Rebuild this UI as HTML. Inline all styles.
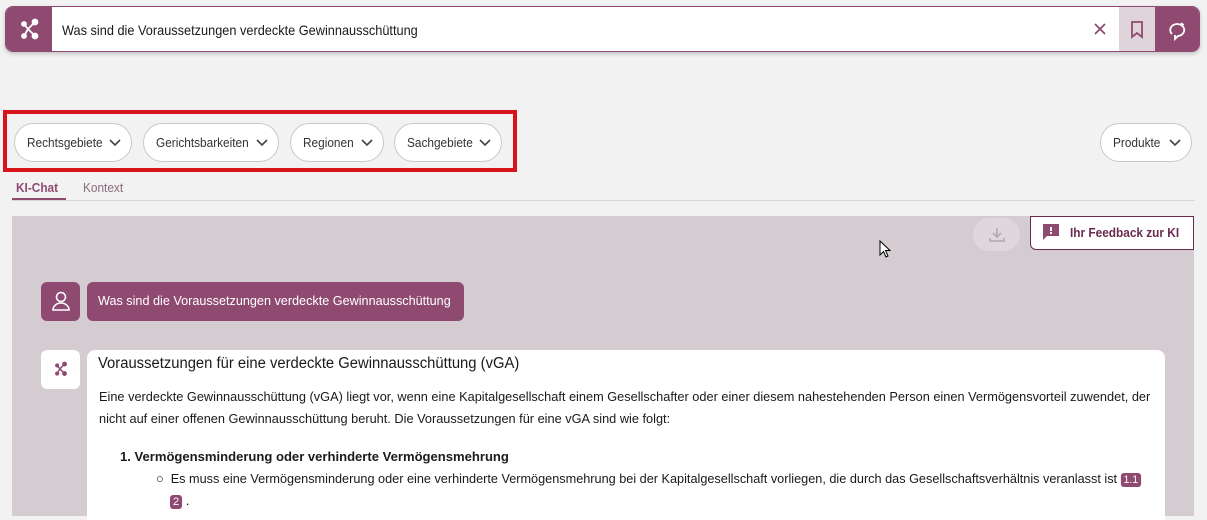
<!DOCTYPE html>
<html><head><meta charset="utf-8"><style>
*{box-sizing:border-box;margin:0;padding:0}
body{width:1207px;height:515px;overflow:hidden;background:#f2f2f2;font-family:"Liberation Sans",sans-serif;color:#1a1a1a;position:relative}
.abs{position:absolute}
.n{display:inline-block;transform:scaleX(.91);transform-origin:left center;white-space:nowrap}
.search{left:5px;top:6px;width:1195px;height:46px;border:1px solid #8f4a71;border-radius:8px;background:#fff;overflow:hidden;box-shadow:0 2px 4px rgba(0,0,0,.2)}
.logo{left:0;top:0;width:46px;height:46px;background:#8f4a71}
.pill{top:123px;height:39px;border:1px solid #c8c8c8;border-radius:20px;background:#fff;font-size:13px;color:#333;padding:11px 0 0 12px}
.pill svg{position:absolute;right:10px;top:15px}
.badge{display:inline-block;background:#8f4a71;color:#fff;border-radius:3px;font-size:11px;line-height:14px;padding:0 3px}
</style></head><body>
<div class="abs search">
 <div class="abs logo"><svg width="46" height="46" viewBox="0 0 46 46"><g stroke="#fff" stroke-width="1.8" fill="#fff"><line x1="18" y1="17" x2="22" y2="22"/><line x1="29" y1="15" x2="22" y2="22"/><line x1="18" y1="29" x2="22" y2="22"/><line x1="22" y1="22" x2="28" y2="28"/><circle cx="18" cy="17" r="2"/><circle cx="29" cy="15" r="2.5"/><circle cx="18" cy="29" r="2"/><circle cx="29" cy="29" r="2.5"/></g></svg></div>
 <div class="abs" style="left:56px;top:15px;font-size:14px"><span class="n">Was sind die Voraussetzungen verdeckte Gewinnausschüttung</span></div>
 <svg class="abs" style="left:1087px;top:15px" width="14" height="14"><path d="M2 2L12 12M12 2L2 12" stroke="#8f4a71" stroke-width="1.8"/></svg>
 <div class="abs" style="left:1113px;top:0;width:36px;height:46px;background:#dfd4da"><svg style="position:absolute;left:11px;top:14px" width="14" height="18"><path d="M2 1H12V16L7 12L2 16Z" fill="none" stroke="#8f4a71" stroke-width="1.8"/></svg></div>
 <div class="abs" style="left:1149px;top:0;width:46px;height:46px;background:#8f4a71"><svg style="position:absolute;left:12px;top:12px" width="22" height="22" viewBox="0 0 22 22"><path d="M5 15A7 6 0 1 1 11 17L8 20L8 16" fill="none" stroke="#fff" stroke-width="1.8"/><path d="M14 4L16 5.5L14 7" fill="none" stroke="#fff" stroke-width="1.6"/></svg></div>
</div>
<div class="abs" style="left:3px;top:110px;width:514px;height:62px;border:4px solid #d7141a"></div>
<div class="abs pill" style="left:14px;width:118px"><span class="n">Rechtsgebiete</span><svg width="12" height="8"><path d="M1 1L6 6L11 1" fill="none" stroke="#444" stroke-width="1.6"/></svg></div>
<div class="abs pill" style="left:143px;width:136px"><span class="n">Gerichtsbarkeiten</span><svg width="12" height="8"><path d="M1 1L6 6L11 1" fill="none" stroke="#444" stroke-width="1.6"/></svg></div>
<div class="abs pill" style="left:290px;width:94px"><span class="n">Regionen</span><svg width="12" height="8"><path d="M1 1L6 6L11 1" fill="none" stroke="#444" stroke-width="1.6"/></svg></div>
<div class="abs pill" style="left:394px;width:108px"><span class="n">Sachgebiete</span><svg width="12" height="8"><path d="M1 1L6 6L11 1" fill="none" stroke="#444" stroke-width="1.6"/></svg></div>
<div class="abs pill" style="left:1100px;width:92px"><span class="n">Produkte</span><svg width="12" height="8"><path d="M1 1L6 6L11 1" fill="none" stroke="#444" stroke-width="1.6"/></svg></div>
<div class="abs" style="left:16px;top:180px;font-size:13px;font-weight:bold;color:#8f4a71"><span class="n">KI-Chat</span></div>
<div class="abs" style="left:12px;top:198px;width:54px;height:2px;background:#8f4a71"></div>
<div class="abs" style="left:83px;top:180px;font-size:13px;color:#8a6a7a"><span class="n">Kontext</span></div>
<div class="abs" style="left:12px;top:200px;width:1183px;height:1px;background:#d8d8d8"></div>
<div class="abs" style="left:12px;top:216px;width:1182px;height:300px;background:#d5ccd2"></div>
<div class="abs" style="left:973px;top:218px;width:47px;height:33px;border-radius:17px;background:#ded7db"><svg style="position:absolute;left:16px;top:9px" width="16" height="16"><path d="M8 1V10M4 6L8 10L12 6M1 11V14H15V11" fill="none" stroke="#b3a8ae" stroke-width="1.6"/></svg></div>
<div class="abs" style="left:1030px;top:216px;width:164px;height:34px;background:#fff;border:1px solid #6b2b4e;border-radius:0 0 0 6px;font-size:13px;font-weight:bold;color:#6b2b4e;padding:8px 0 0 39px"><span class="n">Ihr Feedback zur KI</span></div>
<svg class="abs" style="left:1042px;top:223px" width="18" height="18"><path d="M1 1H17V13H5L1 17Z" fill="#8f4a71"/><rect x="8" y="4" width="2" height="4" fill="#fff"/><rect x="8" y="9" width="2" height="2" fill="#fff"/></svg>
<svg class="abs" style="left:879px;top:240px" width="12" height="18"><path d="M1 1V15L4.5 11.5L7 17L9 16L6.5 10.5H11Z" fill="#fff" stroke="#000"/></svg>
<div class="abs" style="left:41px;top:282px;width:39px;height:39px;border-radius:6px;background:#8f4a71"><svg style="position:absolute;left:10px;top:9px" width="20" height="20"><circle cx="10" cy="6" r="4.5" fill="none" stroke="#fff" stroke-width="1.6"/><path d="M2 19A8 7 0 0 1 18 19Z" fill="none" stroke="#fff" stroke-width="1.6"/></svg></div>
<div class="abs" style="left:87px;top:282px;width:377px;height:39px;border-radius:6px;background:#8f4a71;color:#fff;font-size:13.3px;padding:11px 0 0 11px"><span class="n" style="transform:scaleX(.95)">Was sind die Voraussetzungen verdeckte Gewinnausschüttung</span></div>
<div class="abs" style="left:41px;top:350px;width:39px;height:39px;border-radius:6px;background:#fff"><svg style="position:absolute;left:4px;top:4px" width="31" height="31" viewBox="0 0 46 46"><g stroke="#8f4a71" stroke-width="2.2" fill="#8f4a71"><line x1="18" y1="17" x2="22" y2="22"/><line x1="29" y1="15" x2="22" y2="22"/><line x1="18" y1="29" x2="22" y2="22"/><line x1="22" y1="22" x2="28" y2="28"/><circle cx="18" cy="17" r="2"/><circle cx="29" cy="15" r="2.5"/><circle cx="18" cy="29" r="2"/><circle cx="29" cy="29" r="2.5"/></g></svg></div>
<div class="abs" style="left:87px;top:350px;width:1078px;height:170px;border-radius:8px 8px 0 0;background:#fff">
 <div class="abs" style="left:11px;top:5px;font-size:15.5px"><span class="n" style="transform:scaleX(.955)">Voraussetzungen für eine verdeckte Gewinnausschüttung (vGA)</span></div>
 <div class="abs" style="left:12px;top:36px;font-size:13.2px;line-height:22px"><span class="n" style="transform:scaleX(.967)">Eine verdeckte Gewinnausschüttung (vGA) liegt vor, wenn eine Kapitalgesellschaft einem Gesellschafter oder einer diesem nahestehenden Person einen Vermögensvorteil zuwendet, der</span><br><span class="n" style="transform:scaleX(.967)">nicht auf einer offenen Gewinnausschüttung beruht. Die Voraussetzungen für eine vGA sind wie folgt:</span></div>
 <div class="abs" style="left:33px;top:99px;font-size:13.2px;font-weight:bold"><span class="n" style="transform:scaleX(.99)">1. Vermögensminderung oder verhinderte Vermögensmehrung</span></div>
 <div class="abs" style="left:69px;top:121px;font-size:13.2px"><span class="n" style="transform:scaleX(.962)">○&nbsp; Es muss eine Vermögensminderung oder eine verhinderte Vermögensmehrung bei der Kapitalgesellschaft vorliegen, die durch das Gesellschaftsverhältnis veranlasst ist <span class="badge">1.1</span></span></div>
 <div class="abs" style="left:83px;top:143px;font-size:13.2px"><span class="badge">2</span> .</div>
</div>
</body></html>
